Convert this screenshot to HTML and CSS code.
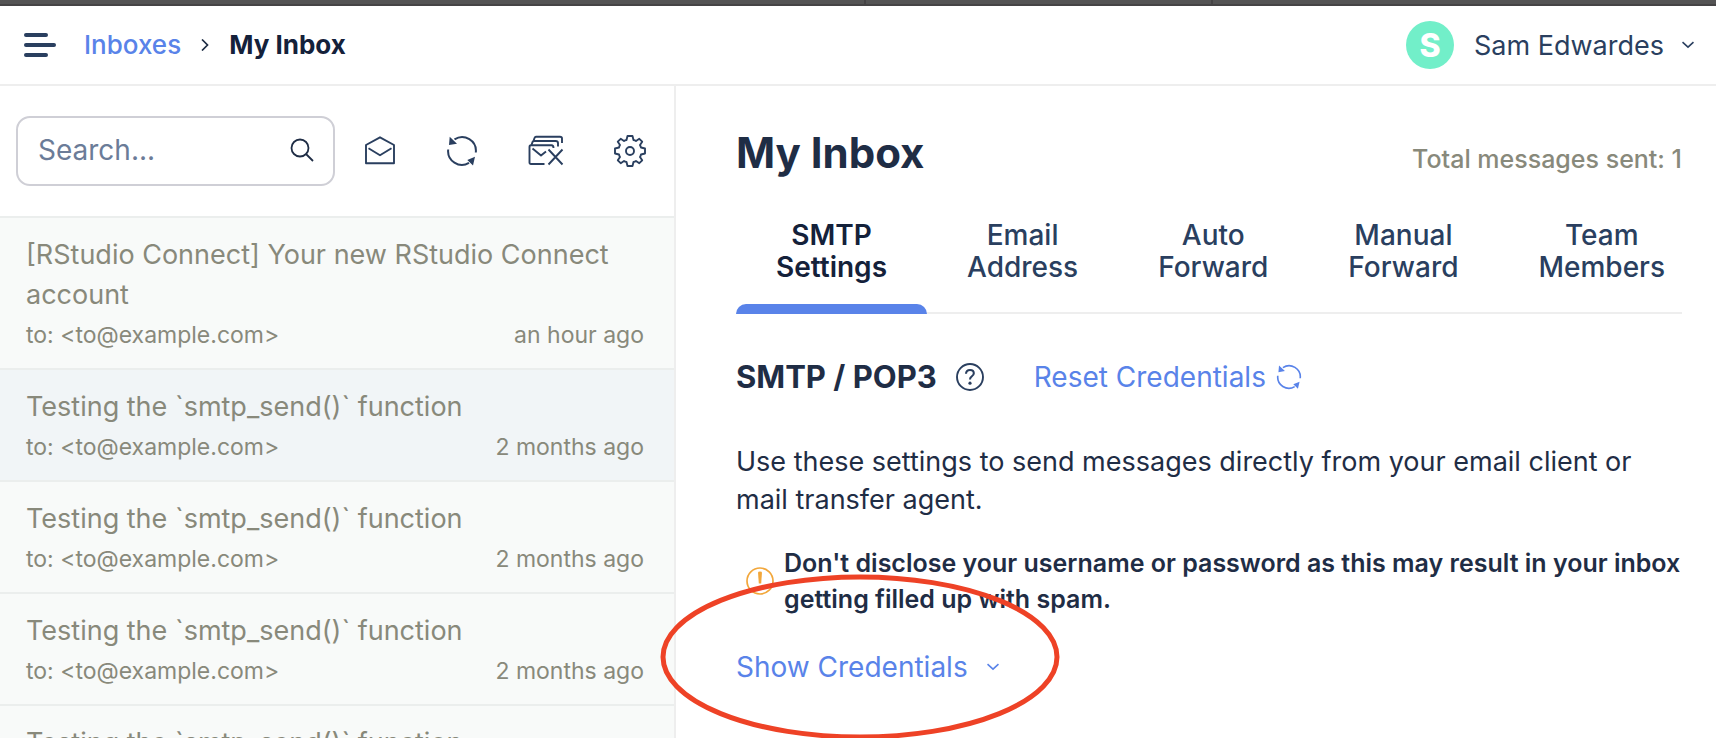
FILE: index.html
```html
<!DOCTYPE html>
<html lang="en">
<head>
<meta charset="utf-8">
<title>My Inbox</title>
<link rel="stylesheet" href="styles.css">
</head>
<body>
<svg class="defs" aria-hidden="true">
  <symbol id="refresh" viewBox="0 0 32 32">
    <path d="M8.500 4.400A13.800 13.800 0 0 1 29.800 17.500M23 27.900A13.800 13.800 0 0 1 2.200 14.500" fill="none" stroke="currentColor" stroke-width="2"/>
    <path d="M3.700 1.800L3 10L11 8.700ZM29 21.700L21.300 25L27 30.500Z" fill="currentColor"/>
  </symbol>
  <symbol id="chevron" viewBox="0 0 12 8">
    <path d="M0.500 1.200L6 6.200L11.500 1.200" fill="none" stroke="currentColor" stroke-width="1.600"/>
  </symbol>
</svg>
<div class="app">
  <div class="window-edge"><i></i><i></i><i></i></div>
  <header class="topbar">
    <button class="menu" aria-label="Menu"><span></span><span></span><span></span></button>
    <nav class="crumbs">
      <a href="#">Inboxes</a>
      <svg class="crumb-sep" viewBox="0 0 8 12"><path d="M1 0.500L6.500 6L1 11.500" fill="none" stroke="currentColor" stroke-width="1.700"/></svg>
      <strong>My Inbox</strong>
    </nav>
    <button class="account"><span class="avatar">S</span><span>Sam Edwardes</span><svg class="chevron"><use href="#chevron"/></svg></button>
  </header>
  <div class="columns">
    <aside class="sidebar">
      <div class="toolbar">
        <label class="search">
          <input type="text" placeholder="Search..." aria-label="Search">
          <svg class="search-icon" viewBox="0 0 24 24"><g fill="none" stroke="currentColor" stroke-width="1.800"><circle cx="10" cy="10" r="8.500"/><path d="M16 16L23 23"/></g></svg>
        </label>
        <div class="tools">
          <button class="tool" aria-label="Mark all read"><svg viewBox="0 0 32 32"><g fill="none" stroke="currentColor" stroke-width="1.900" stroke-linejoin="round"><path d="M2 10L16 2.300L30 10V28.200H2Z"/><path d="M4.500 13.300L16 20.300L27.500 13.300"/></g></svg></button>
          <button class="tool" aria-label="Refresh"><svg><use href="#refresh"/></svg></button>
          <button class="tool tool-wide" aria-label="Clear inbox"><svg viewBox="0 0 36 32"><g fill="none" stroke="currentColor" stroke-width="1.900" stroke-linejoin="round"><path d="M16.500 29H3Q1.500 29 1.500 27.500V12Q1.500 10.300 3 10.300H23.500Q25.500 10.300 25.500 13"/><path d="M4.500 13.500L13 20.500L18 16.500"/><path d="M3.500 10L4.500 7Q5 6 6 6H27.500Q30 6 30 8V11.500"/><path d="M5.500 6L6.500 3Q7 1.700 8 1.700H32Q34 1.700 34 3.500V8"/><path d="M20.500 14.500L34.500 29.500M34.500 14.500L20.500 29.500"/></g></svg></button>
          <button class="tool" aria-label="Settings"><svg viewBox="0 0 32 32"><g fill="none" stroke="currentColor" stroke-width="1.900" stroke-linejoin="round"><path d="M13.500 1H18.500L19.500 5Q21 5.300 22 6L25.300 3.800L28.200 6.700L26 10Q26.700 11.500 27 12.500L31 13.500V18.500L27 19.500Q26.700 21 26 22L28.200 25.300L25.300 28.200L22 26Q21 26.700 19.500 27L18.500 31H13.500L12.500 27Q11 26.700 10 26L6.700 28.200L3.800 25.300L6 22Q5.300 21 5 19.500L1 18.500V13.500L5 12.500Q5.300 11 6 10L3.800 6.700L6.700 3.800L10 6Q11 5.300 12.500 5Z"/><circle cx="16" cy="16" r="4"/></g></svg></button>
        </div>
      </div>
      <ul class="messages">
        <li><a href="#"><span class="subject">[RStudio Connect] Your new RStudio Connect account</span><span class="meta"><span>to: &lt;to@example.com&gt;</span><time>an hour ago</time></span></a></li>
        <li class="selected"><a href="#"><span class="subject">Testing the `smtp_send()` function</span><span class="meta"><span>to: &lt;to@example.com&gt;</span><time>2 months ago</time></span></a></li>
        <li><a href="#"><span class="subject">Testing the `smtp_send()` function</span><span class="meta"><span>to: &lt;to@example.com&gt;</span><time>2 months ago</time></span></a></li>
        <li><a href="#"><span class="subject">Testing the `smtp_send()` function</span><span class="meta"><span>to: &lt;to@example.com&gt;</span><time>2 months ago</time></span></a></li>
        <li><a href="#"><span class="subject">Testing the `smtp_send()` function</span></a></li>
      </ul>
    </aside>
    <main class="main">
      <div class="title-row"><h1>My Inbox</h1><p class="total">Total messages sent: 1</p></div>
      <nav class="tabs">
        <a class="active" href="#">SMTP Settings</a><a href="#">Email Address</a><a href="#">Auto Forward</a><a href="#">Manual Forward</a><a href="#">Team Members</a>
      </nav>
      <section>
        <div class="section-head">
          <h2>SMTP / POP3</h2>
          <button class="help" aria-label="Help"><svg viewBox="0 0 30 30"><circle cx="15" cy="15" r="13" fill="none" stroke="currentColor" stroke-width="1.900"/><path d="M11 11.800Q11.200 8 15 8Q18.800 8 18.800 11.300Q18.800 13.200 16.800 14.300Q15 15.300 15 17.500" fill="none" stroke="currentColor" stroke-width="2.100"/><circle cx="15" cy="21.200" r="1.600" fill="currentColor"/></svg></button>
          <a class="reset" href="#">Reset Credentials <svg><use href="#refresh"/></svg></a>
        </div>
        <p class="intro">Use these settings to send messages directly from your email client or mail transfer agent.</p>
        <div class="warning">
          <svg viewBox="0 0 28 28"><circle cx="14" cy="14" r="13" fill="none" stroke="currentColor" stroke-width="1.700"/><path d="M12 5.500Q12 4.500 14 4.500Q16 4.500 16 5.500L15.200 16.500H12.800Z" fill="currentColor"/><circle cx="14" cy="20.500" r="1.700" fill="currentColor"/></svg>
          <p>Don't disclose your username or password as this may result in your inbox getting filled up with spam.</p>
        </div>
        <div class="credentials">
          <button class="show">Show Credentials<svg class="chevron"><use href="#chevron"/></svg></button>
          <svg class="highlight" viewBox="0 0 400 166"><ellipse cx="200" cy="83" rx="197" ry="80" fill="none" stroke="#ee4226" stroke-width="5"/></svg>
        </div>
      </section>
    </main>
  </div>
</div>
</body>
</html>
```
FILE: styles.css
```css
* { box-sizing: border-box; }
body { margin: 0; background: #fff; color: #1f2d45; font-family: Inter, "Liberation Sans", sans-serif; font-size: 28px; }
h1, h2, p, ul { margin: 0; padding: 0; }
a { color: inherit; text-decoration: none; }
button { margin: 0; padding: 0; border: 0; background: none; color: inherit; font: inherit; cursor: pointer; }
svg { display: block; flex: none; }
.defs { position: absolute; width: 0; height: 0; }
.app { display: flex; flex-direction: column; height: 100vh; overflow: hidden; }

.window-edge { flex: none; display: grid; grid-template-columns: 864fr 345fr 503fr; gap: 2px; height: 6px; background: #454445; border-bottom: 2px solid #454445; }
.window-edge i { background: #545454; }
.topbar { flex: none; display: flex; align-items: center; height: 80px; padding: 0 22px 0 24px; border-bottom: 2px solid #eee; }
.menu { display: flex; flex-direction: column; gap: 6px; width: 32px; margin-right: 28px; }
.menu span { width: 24px; height: 4px; border-radius: 2px; background: #2a3f5f; }
.menu span:nth-child(2) { width: 32px; }
.crumbs { display: flex; align-items: center; padding-bottom: 2px; font-size: 26px; }
.crumbs a { color: #5983e9; font-weight: 500; }
.crumbs strong { color: #14213a; font-weight: 700; }
.crumb-sep { width: 8px; height: 12px; margin: 2px 20px 0; }
.account { display: flex; align-items: center; margin-left: auto; color: #2a3f5f; font-size: 27px; }
.avatar { display: grid; place-items: center; width: 48px; height: 48px; margin-right: 20px; border-radius: 50%; background: #72efc9; color: #fff; font-size: 32px; font-weight: 800; }
.chevron { width: 12px; height: 8px; }
.account .chevron { margin-left: 18px; }

.columns { flex: 1; display: grid; grid-template-columns: 676px minmax(0, 1fr); min-height: 0; }
.sidebar { border-right: 2px solid #eee; min-height: 0; overflow: hidden; }
.toolbar { display: flex; align-items: center; padding: 30px 28px 30px 16px; }
.search { position: relative; flex: 1; display: flex; }
.search input { width: 100%; height: 70px; padding: 0 60px 2px 20px; border: 2px solid #cfcfd6; border-radius: 14px; outline: 0; background: #fff; color: #1f2d45; font: inherit; }
.search input::placeholder { color: #6b7c98; opacity: 1; }
.search-icon { position: absolute; right: 21px; top: 22px; width: 24px; height: 24px; }
.tools { display: flex; align-items: center; gap: 50px; margin-left: 29px; color: #2a3f5f; }
.tool svg { width: 32px; height: 32px; }
.tool-wide svg { width: 36px; }
.messages { list-style: none; color: #88897b; }
.messages li { border-top: 2px solid #ebeeed; background: #f8faf9; }
.messages .selected { background: #f1f5f7; }
.messages a { display: block; padding: 17px 30px 13px 26px; }
.subject { display: block; font-size: 27px; line-height: 40px; }
.meta { display: flex; justify-content: space-between; font-size: 23px; line-height: 40px; }

.main { padding: 40px 34px 0 60px; }
.title-row { display: flex; align-items: baseline; justify-content: space-between; }
h1 { font-size: 42px; line-height: 54px; font-weight: 700; }
.total { color: #88897b; font-size: 25px; font-weight: 500; }
.tabs { display: flex; margin-top: 39px; border-bottom: 2px solid #eee; color: #2a3f5f; }
.tabs a { position: relative; flex: none; width: min-content; padding: 0 40px 29px; font-weight: 500; line-height: 32px; text-align: center; }
.tabs .active { color: #14213a; font-weight: 600; }
.tabs .active::after { content: ""; position: absolute; left: 0; right: 0; bottom: -2px; height: 10px; border-radius: 10px 10px 0 0; background: #5983e9; }
.section-head { display: flex; align-items: center; margin-top: 43px; }
h2 { font-size: 31px; line-height: 40px; font-weight: 700; }
.help { margin-left: 18px; color: #2a3f5f; }
.help svg { width: 30px; height: 30px; }
.reset { display: flex; align-items: center; gap: 10px; margin-left: 49px; color: #5983e9; }
.reset svg { width: 26px; height: 26px; }
.intro { margin-top: 46px; font-size: 27px; line-height: 38px; }
.warning { display: flex; align-items: center; gap: 10px; margin-top: 26px; padding-left: 10px; font-size: 25px; line-height: 36px; font-weight: 600; }
.warning svg { width: 28px; height: 28px; color: #f2a73b; }
.credentials { position: relative; margin-top: 30px; color: #5983e9; }
.show { display: flex; align-items: center; line-height: 40px; }
.show .chevron { margin-left: 19px; }
.highlight { position: absolute; left: -76px; top: -73px; width: 400px; height: 166px; pointer-events: none; }
```
